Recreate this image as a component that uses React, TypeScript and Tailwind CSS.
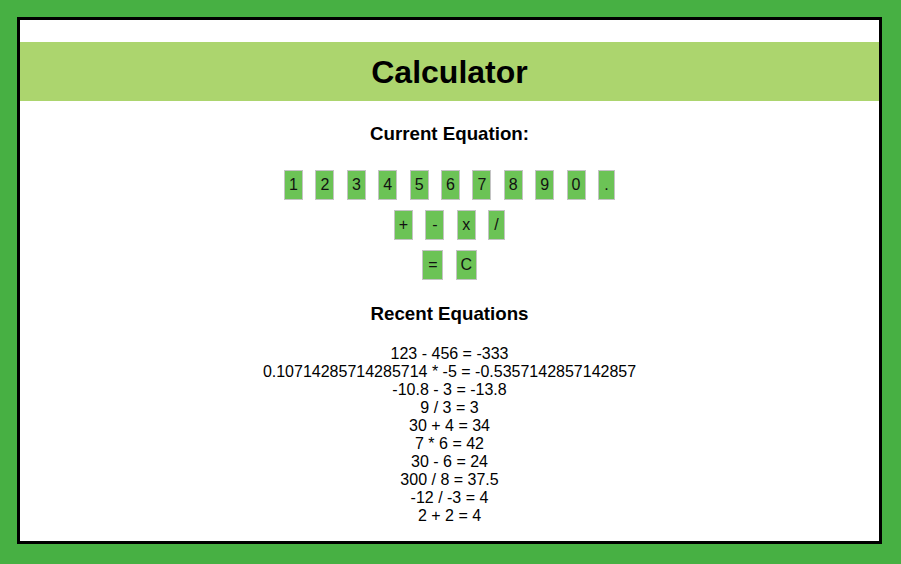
const digits = ['1', '2', '3', '4', '5', '6', '7', '8', '9', '0', '.']
const operators = ['+', '-', 'x', '/']
const controls = ['=', 'C']

const recent = [
  '123 - 456 = -333',
  '0.10714285714285714 * -5 = -0.5357142857142857',
  '-10.8 - 3 = -13.8',
  '9 / 3 = 3',
  '30 + 4 = 34',
  '7 * 6 = 42',
  '30 - 6 = 24',
  '300 / 8 = 37.5',
  '-12 / -3 = 4',
  '2 + 2 = 4',
]

function Key({ label }: { label: string }) {
  const narrow = label === '/' || label === '.'
  const wide = label === '=' || label === 'C'
  return (
    <button
      className={
        'h-[30px] border border-[#c4c4c4] bg-[#6cc356] text-[16px] text-[#111] leading-none flex items-center justify-center ' +
        (narrow ? 'w-[17px]' : wide ? 'w-[21px]' : 'w-[19px]')
      }
    >
      {label}
    </button>
  )
}

function KeyRow({ keys }: { keys: string[] }) {
  return (
    <div className="flex justify-center gap-[12.4px]">
      {keys.map(k => <Key key={k} label={k} />)}
    </div>
  )
}

export default function App() {
  return (
    <div
      className="w-[901px] h-[564px] bg-[#47b043] pl-[17px] pt-[17px]"
      style={{ fontFamily: '"Liberation Sans", Arial, sans-serif' }}
    >
      <div className="w-[865px] h-[527px] border-[3px] border-black bg-white pt-[22px] text-black">
        <div className="h-[59px] bg-[#acd56e] flex items-center justify-center">
          <h1 className="text-[32px] font-bold leading-none">Calculator</h1>
        </div>

        <h3 className="mt-[22px] text-[18.72px] font-bold text-center leading-[22px]">Current Equation:</h3>

        <div className="mt-[25px] flex flex-col gap-[10px]">
          <KeyRow keys={digits} />
          <KeyRow keys={operators} />
          <KeyRow keys={controls} />
        </div>

        <h3 className="mt-[23px] text-[18.72px] font-bold text-center leading-[22px]">Recent Equations</h3>

        <div className="mt-[20px] flex flex-col items-center text-[16px] leading-[18px]">
          {recent.map((eq, i) => (
            <div key={i}>{eq}</div>
          ))}
        </div>
      </div>
    </div>
  )
}
